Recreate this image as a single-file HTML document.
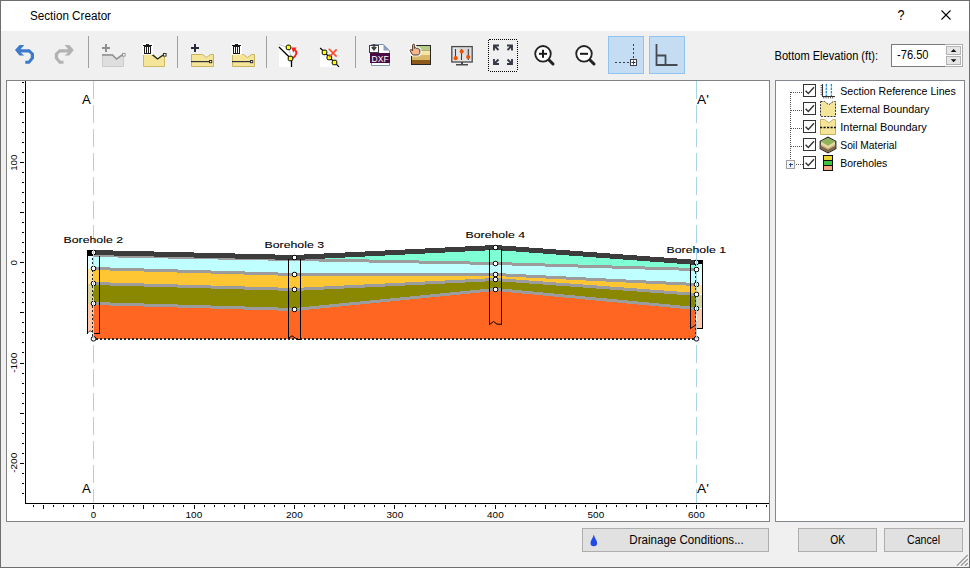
<!DOCTYPE html>
<html><head><meta charset="utf-8">
<style>
html,body{margin:0;padding:0;}
body{width:970px;height:568px;overflow:hidden;background:#f0f0f0;}
svg{display:block;font-family:"Liberation Sans", sans-serif;}
</style></head><body>
<svg width="970" height="568" viewBox="0 0 970 568">
<rect x="0" y="0" width="970" height="568" fill="#f0f0f0"/>
<rect x="1" y="1" width="968" height="30" fill="#fff"/>
<rect x="0.5" y="0.5" width="969" height="567" fill="none" stroke="#6e6e6e" shape-rendering="crispEdges"/>
<text x="30" y="20" font-size="12" text-anchor="start" fill="#000" textLength="81" lengthAdjust="spacingAndGlyphs" >Section Creator</text>
<text x="897.6" y="20" font-size="14.5" text-anchor="start" fill="#000" textLength="7" lengthAdjust="spacingAndGlyphs" >?</text>
<path d="M941.5 10.5 L950.5 19.5 M950.5 10.5 L941.5 19.5" stroke="#000" stroke-width="1.1" fill="none"/>
<g fill="#a0a0a0" shape-rendering="crispEdges">
<rect x="88" y="36" width="1" height="32"/>
<rect x="177" y="36" width="1" height="32"/>
<rect x="266" y="36" width="1" height="32"/>
<rect x="355" y="36" width="1" height="32"/>
</g>
<path d="M15 50 L19.5 45 H24.3 L20.6 49.2 H29.6 L34 53.4 V58.6 L29.6 63.8 H25.3 V60.8 H28.3 L30.8 57.6 V54.4 L28.6 52.4 H20.6 L24.3 55.6 H19.5 Z" fill="#3c7bcb"/>
<path d="M15 50 L19.5 45 H24.3 L20.6 49.2 H29.6 L34 53.4 V58.6 L29.6 63.8 H25.3 V60.8 H28.3 L30.8 57.6 V54.4 L28.6 52.4 H20.6 L24.3 55.6 H19.5 Z" transform="translate(88.8 0) scale(-1 1)" fill="#b2b2b2"/>
<path d="M102.5 54.5 H112.5 L116.5 58.5 L121.5 55 V54.5 H123.5 V66.5 H102.5 Z" fill="#dedede" stroke="#cacaca" stroke-width="1"/>
<path d="M102 55 H112.5 L116.5 59 L122 55.2" fill="none" stroke="#8e8e8e" stroke-width="1.4"/>
<rect x="122.5" y="53.5" width="2.6" height="2.6" fill="#fff" stroke="#8e8e8e" stroke-width="0.9"/>
<g fill="#8e8e8e" shape-rendering="crispEdges"><rect x="105" y="44" width="2" height="8"/><rect x="102" y="47" width="8" height="2"/></g>
<path d="M143.5 54.5 H153.5 L157.5 58.5 L162.5 55 V54.5 H164.5 V66.5 H143.5 Z" fill="#f5e598" stroke="#cdb962" stroke-width="1"/>
<path d="M152 54.6 L157.5 59 L163 55.2" fill="none" stroke="#222" stroke-width="1.3"/>
<rect x="163.5" y="53.5" width="2.6" height="2.6" fill="#fff" stroke="#222" stroke-width="0.9"/>
<rect x="142.5" y="43" width="10.5" height="12" fill="#fff" opacity="0.85"/>
<g fill="#1a1a1a" shape-rendering="crispEdges">
<rect x="143" y="45" width="9" height="1"/>
<rect x="146" y="44" width="3" height="1"/>
<rect x="144" y="46" width="7" height="8"/>
</g>
<g fill="#fff" shape-rendering="crispEdges"><rect x="145" y="47" width="1" height="6"/><rect x="147" y="47" width="1" height="6"/><rect x="149" y="47" width="1" height="6"/></g>
<path d="M191.5 54.5 H202.5 L206.5 57.5 L210.5 54.5 H213.5 V66.5 H191.5 Z" fill="#f5e598" stroke="#c7b35c" stroke-width="1"/>
<rect x="191" y="61" width="18" height="1.2" fill="#2d2f3a"/>
<rect x="209.5" y="60.5" width="2.2" height="2.2" fill="#fff" stroke="#2d2f3a" stroke-width="1"/>
<g fill="#2a2c38" shape-rendering="crispEdges"><rect x="194" y="44" width="2" height="8"/><rect x="191" y="47" width="8" height="2"/></g>
<path d="M232.5 54.5 H243.5 L247.5 57.5 L251.5 54.5 H254.5 V66.5 H232.5 Z" fill="#f5e598" stroke="#c7b35c" stroke-width="1"/>
<rect x="232" y="61" width="18" height="1.2" fill="#2d2f3a"/>
<rect x="250.5" y="60.5" width="2.2" height="2.2" fill="#fff" stroke="#2d2f3a" stroke-width="1"/>
<rect x="231.5" y="43" width="10.5" height="12" fill="#fff" opacity="0.85"/>
<g fill="#1a1a1a" shape-rendering="crispEdges">
<rect x="232" y="45" width="9" height="1"/>
<rect x="235" y="44" width="3" height="1"/>
<rect x="233" y="46" width="7" height="8"/>
</g>
<g fill="#fff" shape-rendering="crispEdges"><rect x="234" y="47" width="1" height="6"/><rect x="236" y="47" width="1" height="6"/><rect x="238" y="47" width="1" height="6"/></g>
<rect x="279" y="44" width="13" height="23" fill="#fff"/>
<path d="M279 44.5 L288.5 47.5 L291.5 58" fill="none" stroke="#c8c8c8" stroke-width="1"/>
<path d="M279 47 L290.5 58.3 M291.5 58.5 V67" fill="none" stroke="#000" stroke-width="1.3"/>
<path d="M292.2 58.4 C296.8 56 297.6 51.6 294.4 49.6" fill="none" stroke="#ff1a1a" stroke-width="1.8"/>
<path d="M291.4 47.6 L296.6 47.4 L293.2 52.6 Z" fill="#ff1a1a"/>
<rect x="286.2" y="45.1" width="4.6" height="4.6" rx="1.6" fill="#ffff00" stroke="#000" stroke-width="1"/>
<rect x="288.2" y="56.2" width="4.6" height="4.6" rx="1.6" fill="#ffff00" stroke="#000" stroke-width="1"/>
<path d="M320 48 L339 67 H320 Z" fill="#fff"/>
<path d="M320.2 48 L339 66.8" stroke="#000" stroke-width="1.2"/>
<rect x="322.2" y="50.1" width="4.6" height="4.6" rx="1.6" fill="#ffff00" stroke="#000" stroke-width="1"/>
<rect x="327.0" y="55.2" width="4.6" height="4.6" rx="1.6" fill="#ffff00" stroke="#000" stroke-width="1"/>
<rect x="332.2" y="60.2" width="4.6" height="4.6" rx="1.6" fill="#ffff00" stroke="#000" stroke-width="1"/>
<path d="M328.8 48.8 L336.6 56.6 M336.6 49.4 L329.4 57" stroke="#ff4a2a" stroke-width="1.6"/>
<path d="M371.5 44.5 H383.5 L389.5 50.5 V65.5 H371.5 Z" fill="#fff" stroke="#7f93b2" stroke-width="1"/>
<path d="M383.5 44.5 V50.5 H389.5 Z" fill="#8c9fbf"/>
<rect x="370" y="53" width="20" height="10" fill="#4a0a48"/>
<text x="371.6" y="61.8" font-size="9.6" fill="#fff" textLength="17" lengthAdjust="spacingAndGlyphs">DXF</text>
<rect x="369.5" y="45.5" width="9" height="7" fill="#fff" stroke="#3e3e3e" stroke-width="1"/>
<path d="M374 44 V49 M371.8 47 L374 49.7 L376.2 47" fill="none" stroke="#3e3e3e" stroke-width="1.6"/>
<rect x="411" y="45" width="20" height="20" fill="#262626" />
<rect x="412" y="46" width="18" height="4.5" fill="#b4cc88"/>
<rect x="412" y="50.5" width="18" height="4.5" fill="#f5e4a2"/>
<rect x="412" y="55" width="18" height="5" fill="#d8b868"/>
<rect x="412" y="60" width="18" height="4" fill="#8e5a1a"/>
<path d="M412.4 54.6 L410.3 51 C409.6 50 410.6 48.9 411.6 49.7 L412.6 50.8 V45.2 C412.6 43.7 414.6 43.7 414.6 45.2 V48.3 C415.2 47.5 416.4 47.6 416.6 48.5 C417.2 47.9 418.3 48.2 418.4 49 C419 48.6 419.8 49.1 419.8 49.9 V52.6 C419.8 54.1 418.8 55 417.2 55 H413.4 Z" fill="#fff" stroke="#fff" stroke-width="3.2" stroke-linejoin="round"/>
<path d="M412.4 54.6 L410.3 51 C409.6 50 410.6 48.9 411.6 49.7 L412.6 50.8 V45.2 C412.6 43.7 414.6 43.7 414.6 45.2 V48.3 C415.2 47.5 416.4 47.6 416.6 48.5 C417.2 47.9 418.3 48.2 418.4 49 C419 48.6 419.8 49.1 419.8 49.9 V52.6 C419.8 54.1 418.8 55 417.2 55 H413.4 Z" fill="#f5b78b" stroke="#3a2418" stroke-width="0.9"/>
<rect x="451.8" y="46.6" width="20.4" height="15.4" fill="#e4e4e4" stroke="#4a4a4a" stroke-width="1.3"/>
<path d="M458 48 L470.5 60 V48 Z" fill="#d6d6d6"/>
<rect x="461" y="62" width="2" height="2" fill="#4a4a4a"/><rect x="456" y="64" width="12" height="1.5" fill="#4a4a4a"/>
<path d="M455.5 49 V60 M461.5 49 V60 M468.3 49 V60" stroke="#3e3e3e" stroke-width="1.1"/>
<circle cx="455.7" cy="58.2" r="2.1" fill="#ee5500"/>
<circle cx="461.7" cy="51.6" r="2.1" fill="#ee5500"/>
<circle cx="468.2" cy="57" r="2.1" fill="#ee5500"/>
<rect x="488.5" y="39.5" width="29" height="32" rx="1.5" fill="none" stroke="#000" stroke-width="1" stroke-dasharray="1 1" shape-rendering="crispEdges"/>
<g fill="none" stroke="#353946" stroke-width="1.9">
<path d="M494 50.5 V45.5 H499 M494.5 46 L498.5 50"/>
<path d="M507 45.5 H512 V50.5 M511.5 46 L507.5 50"/>
<path d="M494 59 V64 H499 M494.5 63.5 L498.5 59.5"/>
<path d="M507 64 H512 V59 M511.5 63.5 L507.5 59.5"/>
</g>
<path d="M548.5 59.5 L553 64.0" stroke="#222" stroke-width="3" stroke-linecap="round"/>
<circle cx="543" cy="53.8" r="7.8" fill="#fff" stroke="#222" stroke-width="1.8"/>
<rect x="539" y="52.8" width="8" height="2" fill="#1a1a1a"/>
<rect x="542" y="49.8" width="2" height="8" fill="#1a1a1a"/>
<path d="M589.5 59.5 L594 64.0" stroke="#222" stroke-width="3" stroke-linecap="round"/>
<circle cx="584" cy="53.8" r="7.8" fill="#fff" stroke="#222" stroke-width="1.8"/>
<rect x="580" y="52.8" width="8" height="2" fill="#1a1a1a"/>
<rect x="608.5" y="36.5" width="35" height="37" fill="#c4ddf2" stroke="#8fc4f2" shape-rendering="crispEdges"/>
<rect x="649.5" y="36.5" width="35" height="37" fill="#c4ddf2" stroke="#8fc4f2" shape-rendering="crispEdges"/>
<path d="M633.5 44 V58" stroke="#3a3f48" stroke-width="1.1" stroke-dasharray="2 2" shape-rendering="crispEdges"/>
<path d="M615 62.5 H629" stroke="#3a3f48" stroke-width="1.1" stroke-dasharray="2 2" shape-rendering="crispEdges"/>
<rect x="630.5" y="59.5" width="6" height="6" fill="#fff" stroke="#3a3f48" stroke-width="1"/>
<path d="M631.5 62.5 H635.5 M633.5 60.5 V64.5" stroke="#3a3f48" stroke-width="1"/>
<path d="M656.5 44 V65 H677.5 M656.5 55.5 H665.5 V65" fill="none" stroke="#454a52" stroke-width="1.8"/>
<text x="774.5" y="60" font-size="12" text-anchor="start" fill="#000" textLength="103.5" lengthAdjust="spacingAndGlyphs" >Bottom Elevation (ft):</text>
<rect x="891.5" y="44.5" width="71" height="22" fill="#fff" stroke="#adadad" shape-rendering="crispEdges"/>
<path d="M945 44.5 H891.5 V66.5 H945" fill="none" stroke="#7a7a7a" shape-rendering="crispEdges"/>
<rect x="946.5" y="46.5" width="14" height="8" fill="#e6e6e6" stroke="#b4b4b4" shape-rendering="crispEdges"/>
<rect x="946.5" y="56.5" width="14" height="8" fill="#e6e6e6" stroke="#b4b4b4" shape-rendering="crispEdges"/>
<path d="M950.8 52 L953.6 49 L956.4 52 Z" fill="#111"/>
<path d="M950.8 59.2 L953.6 62.2 L956.4 59.2 Z" fill="#111"/>
<text x="897" y="58.5" font-size="12" text-anchor="start" fill="#000" textLength="31.5" lengthAdjust="spacingAndGlyphs" >-76.50</text>
<rect x="6.5" y="80.5" width="763" height="441" fill="#fff" stroke="#828282" shape-rendering="crispEdges"/>
<rect x="775.5" y="80.5" width="189" height="441" fill="#fff" stroke="#828790" shape-rendering="crispEdges"/>
<g stroke="#555" stroke-width="1" stroke-dasharray="1 1" shape-rendering="crispEdges" fill="none">
<path d="M790.5 92 V160"/>
<path d="M791 92.5 H803"/>
<path d="M791 110.5 H803"/>
<path d="M791 128.5 H803"/>
<path d="M791 146.5 H803"/>
<path d="M796 164.5 H803"/>
</g>
<rect x="786.5" y="160.5" width="8" height="8" fill="#f4f4f4" stroke="#a0a0a0" shape-rendering="crispEdges"/>
<path d="M788.5 164.5 H792.5 M790.5 162.5 V166.5" stroke="#2c4a9a" stroke-width="1" shape-rendering="crispEdges"/>
<rect x="803.5" y="84.5" width="12" height="12" fill="#fff" stroke="#333" shape-rendering="crispEdges"/>
<path d="M805.6 90.8 L808.3 93.5 L814 87.3" fill="none" stroke="#333" stroke-width="1.4"/>
<rect x="803.5" y="102.5" width="12" height="12" fill="#fff" stroke="#333" shape-rendering="crispEdges"/>
<path d="M805.6 108.8 L808.3 111.5 L814 105.3" fill="none" stroke="#333" stroke-width="1.4"/>
<rect x="803.5" y="120.5" width="12" height="12" fill="#fff" stroke="#333" shape-rendering="crispEdges"/>
<path d="M805.6 126.8 L808.3 129.5 L814 123.3" fill="none" stroke="#333" stroke-width="1.4"/>
<rect x="803.5" y="138.5" width="12" height="12" fill="#fff" stroke="#333" shape-rendering="crispEdges"/>
<path d="M805.6 144.8 L808.3 147.5 L814 141.3" fill="none" stroke="#333" stroke-width="1.4"/>
<rect x="803.5" y="156.5" width="12" height="12" fill="#fff" stroke="#333" shape-rendering="crispEdges"/>
<path d="M805.6 162.8 L808.3 165.5 L814 159.3" fill="none" stroke="#333" stroke-width="1.4"/>
<path d="M822.5 84 V96.5 H835" fill="none" stroke="#333" stroke-width="1.1"/>
<path d="M820.6 85.5 H822 M820.6 87.7 H822 M820.6 90 H822 M820.6 92.2 H822 M820.6 94.4 H822 M823.8 97 V98.4 M826 97 V98.4 M828.3 97 V98.4 M830.5 97 V98.4 M832.7 97 V98.4" stroke="#444" stroke-width="0.9"/>
<path d="M826.3 84 V96 M831.4 84 V96" stroke="#1a8ce0" stroke-width="1.3" stroke-dasharray="2.5 1"/>
<path d="M820.5 101.5 H824.5 L828.8 104.8 L833.2 101.5 H835.5 V116.5 H820.5 Z" fill="#f5e598" stroke="#333" stroke-width="1" stroke-dasharray="2 1.2"/>
<path d="M820.5 119.5 H824.5 L828.8 122.8 L833.2 119.5 H835.5 V134.5 H820.5 Z" fill="#f5e598" stroke="#c8b064" stroke-width="1"/>
<path d="M820 127.5 H836" stroke="#111" stroke-width="1.3" stroke-dasharray="2.2 1.3"/>
<path d="M828 136.6 L836.4 141 V149 L828 153.4 L819.6 149 V141 Z" fill="#262626"/>
<path d="M828 138 L835.2 141.6 V148.4 L828 152.2 L820.8 148.4 V141.6 Z" fill="#e6d9a2"/>
<path d="M820.8 145.8 L828 149.6 L835.2 145.8 V148.4 L828 152.2 L820.8 148.4 Z" fill="#7b6243"/>
<path d="M820.8 144.6 L828 148.4 L835.2 144.6 V145.9 L828 149.7 L820.8 145.9 Z" fill="#b9a273"/>
<path d="M828 138 L835.2 141.6 L828 145.8 L820.8 141.6 Z" fill="#8db45a"/>
<rect x="823" y="155" width="10" height="16" fill="#111"/>
<rect x="824" y="156" width="8" height="4" fill="#e8d630"/>
<rect x="824" y="161" width="8" height="4" fill="#3ec43e"/>
<rect x="824" y="166" width="8" height="4" fill="#f2a983"/>
<text x="840.3" y="94.6" font-size="11.5" text-anchor="start" fill="#000" textLength="115.5" lengthAdjust="spacingAndGlyphs" >Section Reference Lines</text>
<text x="840.3" y="112.6" font-size="11.5" text-anchor="start" fill="#000" textLength="89" lengthAdjust="spacingAndGlyphs" >External Boundary</text>
<text x="840.3" y="130.6" font-size="11.5" text-anchor="start" fill="#000" textLength="86.5" lengthAdjust="spacingAndGlyphs" >Internal Boundary</text>
<text x="840.3" y="148.6" font-size="11.5" text-anchor="start" fill="#000" textLength="56.5" lengthAdjust="spacingAndGlyphs" >Soil Material</text>
<text x="840.3" y="166.6" font-size="11.5" text-anchor="start" fill="#000" textLength="47" lengthAdjust="spacingAndGlyphs" >Boreholes</text>
<rect x="582.5" y="528.5" width="186" height="23" fill="#e1e1e1" stroke="#adadad" shape-rendering="crispEdges"/>
<rect x="798.5" y="528.5" width="78" height="23" fill="#e1e1e1" stroke="#adadad" shape-rendering="crispEdges"/>
<rect x="884.5" y="528.5" width="78" height="23" fill="#e1e1e1" stroke="#adadad" shape-rendering="crispEdges"/>
<text x="629.3" y="544" font-size="12" text-anchor="start" fill="#000" textLength="114.5" lengthAdjust="spacingAndGlyphs" >Drainage Conditions...</text>
<text x="830.3" y="544" font-size="12" text-anchor="start" fill="#000" textLength="14.8" lengthAdjust="spacingAndGlyphs" >OK</text>
<text x="907" y="544" font-size="12" text-anchor="start" fill="#000" textLength="33" lengthAdjust="spacingAndGlyphs" >Cancel</text>
<path d="M593.8 534.5 C593 538 590.5 540.5 590.5 543 A3.3 3.3 0 0 0 597.1 543 C597.1 540.5 594.6 538 593.8 534.5 Z" fill="#2149e8"/>
<path d="M957.5 566.5 L968.5 555.5 M961.5 566.5 L968.5 559.5 M965.5 566.5 L968.5 563.5" stroke="#fff" stroke-width="1.6"/>
<path d="M957 565.8 L967.8 555 M961 565.8 L967.8 559 M965 565.8 L967.8 563" stroke="#9a9a9a" stroke-width="1.4"/>
<g shape-rendering="crispEdges" fill="#000">
<rect x="25" y="81" width="1" height="423"/>
<rect x="25" y="503" width="744" height="1"/>
<rect x="22" y="493" width="2" height="1"/>
<rect x="22" y="483" width="2" height="1"/>
<rect x="22" y="473" width="2" height="1"/>
<rect x="20" y="463" width="4" height="1"/>
<rect x="22" y="453" width="2" height="1"/>
<rect x="22" y="443" width="2" height="1"/>
<rect x="22" y="433" width="2" height="1"/>
<rect x="22" y="423" width="2" height="1"/>
<rect x="20" y="413" width="4" height="1"/>
<rect x="22" y="403" width="2" height="1"/>
<rect x="22" y="393" width="2" height="1"/>
<rect x="22" y="383" width="2" height="1"/>
<rect x="22" y="373" width="2" height="1"/>
<rect x="20" y="363" width="4" height="1"/>
<rect x="22" y="352" width="2" height="1"/>
<rect x="22" y="342" width="2" height="1"/>
<rect x="22" y="332" width="2" height="1"/>
<rect x="22" y="322" width="2" height="1"/>
<rect x="20" y="312" width="4" height="1"/>
<rect x="22" y="302" width="2" height="1"/>
<rect x="22" y="292" width="2" height="1"/>
<rect x="22" y="282" width="2" height="1"/>
<rect x="22" y="272" width="2" height="1"/>
<rect x="20" y="262" width="4" height="1"/>
<rect x="22" y="252" width="2" height="1"/>
<rect x="22" y="242" width="2" height="1"/>
<rect x="22" y="232" width="2" height="1"/>
<rect x="22" y="222" width="2" height="1"/>
<rect x="20" y="212" width="4" height="1"/>
<rect x="22" y="202" width="2" height="1"/>
<rect x="22" y="192" width="2" height="1"/>
<rect x="22" y="182" width="2" height="1"/>
<rect x="22" y="172" width="2" height="1"/>
<rect x="20" y="162" width="4" height="1"/>
<rect x="22" y="152" width="2" height="1"/>
<rect x="22" y="142" width="2" height="1"/>
<rect x="22" y="132" width="2" height="1"/>
<rect x="22" y="122" width="2" height="1"/>
<rect x="20" y="112" width="4" height="1"/>
<rect x="22" y="102" width="2" height="1"/>
<rect x="22" y="92" width="2" height="1"/>
<rect x="22" y="82" width="2" height="1"/>
<rect x="33" y="505" width="1" height="2"/>
<rect x="43" y="505" width="1" height="4"/>
<rect x="53" y="505" width="1" height="2"/>
<rect x="63" y="505" width="1" height="2"/>
<rect x="73" y="505" width="1" height="2"/>
<rect x="83" y="505" width="1" height="2"/>
<rect x="93" y="505" width="1" height="4"/>
<rect x="103" y="505" width="1" height="2"/>
<rect x="113" y="505" width="1" height="2"/>
<rect x="123" y="505" width="1" height="2"/>
<rect x="133" y="505" width="1" height="2"/>
<rect x="143" y="505" width="1" height="4"/>
<rect x="153" y="505" width="1" height="2"/>
<rect x="163" y="505" width="1" height="2"/>
<rect x="173" y="505" width="1" height="2"/>
<rect x="183" y="505" width="1" height="2"/>
<rect x="194" y="505" width="1" height="4"/>
<rect x="204" y="505" width="1" height="2"/>
<rect x="214" y="505" width="1" height="2"/>
<rect x="224" y="505" width="1" height="2"/>
<rect x="234" y="505" width="1" height="2"/>
<rect x="244" y="505" width="1" height="4"/>
<rect x="254" y="505" width="1" height="2"/>
<rect x="264" y="505" width="1" height="2"/>
<rect x="274" y="505" width="1" height="2"/>
<rect x="284" y="505" width="1" height="2"/>
<rect x="294" y="505" width="1" height="4"/>
<rect x="304" y="505" width="1" height="2"/>
<rect x="314" y="505" width="1" height="2"/>
<rect x="324" y="505" width="1" height="2"/>
<rect x="334" y="505" width="1" height="2"/>
<rect x="344" y="505" width="1" height="4"/>
<rect x="354" y="505" width="1" height="2"/>
<rect x="364" y="505" width="1" height="2"/>
<rect x="374" y="505" width="1" height="2"/>
<rect x="384" y="505" width="1" height="2"/>
<rect x="394" y="505" width="1" height="4"/>
<rect x="405" y="505" width="1" height="2"/>
<rect x="415" y="505" width="1" height="2"/>
<rect x="425" y="505" width="1" height="2"/>
<rect x="435" y="505" width="1" height="2"/>
<rect x="445" y="505" width="1" height="4"/>
<rect x="455" y="505" width="1" height="2"/>
<rect x="465" y="505" width="1" height="2"/>
<rect x="475" y="505" width="1" height="2"/>
<rect x="485" y="505" width="1" height="2"/>
<rect x="495" y="505" width="1" height="4"/>
<rect x="505" y="505" width="1" height="2"/>
<rect x="515" y="505" width="1" height="2"/>
<rect x="525" y="505" width="1" height="2"/>
<rect x="535" y="505" width="1" height="2"/>
<rect x="545" y="505" width="1" height="4"/>
<rect x="555" y="505" width="1" height="2"/>
<rect x="565" y="505" width="1" height="2"/>
<rect x="575" y="505" width="1" height="2"/>
<rect x="585" y="505" width="1" height="2"/>
<rect x="596" y="505" width="1" height="4"/>
<rect x="606" y="505" width="1" height="2"/>
<rect x="616" y="505" width="1" height="2"/>
<rect x="626" y="505" width="1" height="2"/>
<rect x="636" y="505" width="1" height="2"/>
<rect x="646" y="505" width="1" height="4"/>
<rect x="656" y="505" width="1" height="2"/>
<rect x="666" y="505" width="1" height="2"/>
<rect x="676" y="505" width="1" height="2"/>
<rect x="686" y="505" width="1" height="2"/>
<rect x="696" y="505" width="1" height="4"/>
<rect x="706" y="505" width="1" height="2"/>
<rect x="716" y="505" width="1" height="2"/>
<rect x="726" y="505" width="1" height="2"/>
<rect x="736" y="505" width="1" height="2"/>
<rect x="746" y="505" width="1" height="4"/>
<rect x="756" y="505" width="1" height="2"/>
<rect x="766" y="505" width="1" height="2"/>
</g>
<text transform="translate(17.3 162.7) rotate(-90)" text-anchor="middle" font-size="9.2" fill="#000" textLength="16.3" lengthAdjust="spacingAndGlyphs">100</text>
<text transform="translate(17.3 262.8) rotate(-90)" text-anchor="middle" font-size="9.2" fill="#000" textLength="5.4" lengthAdjust="spacingAndGlyphs">0</text>
<text transform="translate(17.3 362.8) rotate(-90)" text-anchor="middle" font-size="9.2" fill="#000" textLength="20" lengthAdjust="spacingAndGlyphs">-100</text>
<text transform="translate(17.3 462.8) rotate(-90)" text-anchor="middle" font-size="9.2" fill="#000" textLength="20" lengthAdjust="spacingAndGlyphs">-200</text>
<text x="93.4" y="517.6" text-anchor="middle" font-size="9.2" fill="#000" textLength="5.4" lengthAdjust="spacingAndGlyphs">0</text>
<text x="193.9" y="517.6" text-anchor="middle" font-size="9.2" fill="#000" textLength="16.6" lengthAdjust="spacingAndGlyphs">100</text>
<text x="294.4" y="517.6" text-anchor="middle" font-size="9.2" fill="#000" textLength="16.6" lengthAdjust="spacingAndGlyphs">200</text>
<text x="394.9" y="517.6" text-anchor="middle" font-size="9.2" fill="#000" textLength="16.6" lengthAdjust="spacingAndGlyphs">300</text>
<text x="495.4" y="517.6" text-anchor="middle" font-size="9.2" fill="#000" textLength="16.6" lengthAdjust="spacingAndGlyphs">400</text>
<text x="595.9" y="517.6" text-anchor="middle" font-size="9.2" fill="#000" textLength="16.6" lengthAdjust="spacingAndGlyphs">500</text>
<text x="696.4" y="517.6" text-anchor="middle" font-size="9.2" fill="#000" textLength="16.6" lengthAdjust="spacingAndGlyphs">600</text>
<g shape-rendering="crispEdges">
<rect x="87" y="250" width="6" height="6" fill="#000"/>
<rect x="87" y="250" width="1" height="84" fill="#000"/>
<rect x="88" y="256" width="5" height="13" fill="#e0ffff"/>
<rect x="88" y="269" width="5" height="15" fill="#ffe6a8"/>
<rect x="88" y="284" width="5" height="20" fill="#d8d49c"/>
<rect x="88" y="304" width="5" height="29" fill="#ffc8a8"/>
<rect x="697" y="260" width="6" height="4" fill="#000"/>
<rect x="702" y="260" width="1" height="69" fill="#000"/>
<rect x="697" y="264" width="5" height="5" fill="#c8fff0"/>
<rect x="697" y="269" width="5" height="15" fill="#e0ffff"/>
<rect x="697" y="285" width="5" height="9" fill="#ffe6a8"/>
<rect x="697" y="295" width="5" height="13" fill="#d8d49c"/>
<rect x="697" y="309" width="5" height="19" fill="#ffc8a8"/>
<rect x="697" y="328" width="6" height="1" fill="#000"/>
</g>
<path d="M87.5 333.5 L89.5 331.2 L91 331.2 L93 332.5" fill="none" stroke="#000" stroke-width="1"/>
<path d="M88 333 L89.5 331.6 L91 331.6 L93 333 Z" fill="#fff"/>
<g shape-rendering="crispEdges">
<polygon points="93,252.5 294.5,257.5 495.5,247.5 696,262.4 696,269.53 495.5,263.53 294.5,259.53 93,255.51" fill="#7fffd4"/>
<polygon points="93,255.51 294.5,259.53 495.5,263.53 696,269.53 696,284.49 495.5,274.49 294.5,274.49 93,268.49" fill="#bfffff"/>
<polygon points="93,268.49 294.5,274.49 495.5,274.49 696,284.49 696,294.4 495.5,279.49 294.5,289.49 93,283.49" fill="#ffc633"/>
<polygon points="93,283.49 294.5,289.49 495.5,279.49 696,294.4 696,308.5 495.5,289.49 294.5,309.49 93,303.49" fill="#8a8800"/>
<polygon points="93,303.49 294.5,309.49 495.5,289.49 696,308.5 696,339 93,339" fill="#ff6622"/>
<polyline points="93,255.51 294.5,259.53 495.5,263.53 696,269.53" fill="none" stroke="#9c9c9c" stroke-width="3"/>
<polyline points="93,268.49 294.5,274.49 495.5,274.49 696,284.49" fill="none" stroke="#9c9c9c" stroke-width="3"/>
<polyline points="93,283.49 294.5,289.49 495.5,279.49 696,294.4" fill="none" stroke="#9c9c9c" stroke-width="3"/>
<polyline points="93,303.49 294.5,309.49 495.5,289.49 696,308.5" fill="none" stroke="#9c9c9c" stroke-width="3"/>
<polyline points="93,252.5 294.5,257.5 495.5,247.5 696,262.4" fill="none" stroke="#3c3c3c" stroke-width="5"/>
</g>
<g fill="#1a2836" shape-rendering="crispEdges">
<rect x="92" y="338" width="2" height="2"/>
<rect x="96" y="338" width="2" height="2"/>
<rect x="100" y="338" width="2" height="2"/>
<rect x="104" y="338" width="2" height="2"/>
<rect x="108" y="338" width="2" height="2"/>
<rect x="112" y="338" width="2" height="2"/>
<rect x="116" y="338" width="2" height="2"/>
<rect x="120" y="338" width="2" height="2"/>
<rect x="124" y="338" width="2" height="2"/>
<rect x="128" y="338" width="2" height="2"/>
<rect x="132" y="338" width="2" height="2"/>
<rect x="136" y="338" width="2" height="2"/>
<rect x="140" y="338" width="2" height="2"/>
<rect x="144" y="338" width="2" height="2"/>
<rect x="148" y="338" width="2" height="2"/>
<rect x="152" y="338" width="2" height="2"/>
<rect x="156" y="338" width="2" height="2"/>
<rect x="160" y="338" width="2" height="2"/>
<rect x="164" y="338" width="2" height="2"/>
<rect x="168" y="338" width="2" height="2"/>
<rect x="172" y="338" width="2" height="2"/>
<rect x="176" y="338" width="2" height="2"/>
<rect x="180" y="338" width="2" height="2"/>
<rect x="184" y="338" width="2" height="2"/>
<rect x="188" y="338" width="2" height="2"/>
<rect x="192" y="338" width="2" height="2"/>
<rect x="196" y="338" width="2" height="2"/>
<rect x="200" y="338" width="2" height="2"/>
<rect x="204" y="338" width="2" height="2"/>
<rect x="208" y="338" width="2" height="2"/>
<rect x="212" y="338" width="2" height="2"/>
<rect x="216" y="338" width="2" height="2"/>
<rect x="220" y="338" width="2" height="2"/>
<rect x="224" y="338" width="2" height="2"/>
<rect x="228" y="338" width="2" height="2"/>
<rect x="232" y="338" width="2" height="2"/>
<rect x="236" y="338" width="2" height="2"/>
<rect x="240" y="338" width="2" height="2"/>
<rect x="244" y="338" width="2" height="2"/>
<rect x="248" y="338" width="2" height="2"/>
<rect x="252" y="338" width="2" height="2"/>
<rect x="256" y="338" width="2" height="2"/>
<rect x="260" y="338" width="2" height="2"/>
<rect x="264" y="338" width="2" height="2"/>
<rect x="268" y="338" width="2" height="2"/>
<rect x="272" y="338" width="2" height="2"/>
<rect x="276" y="338" width="2" height="2"/>
<rect x="280" y="338" width="2" height="2"/>
<rect x="284" y="338" width="2" height="2"/>
<rect x="288" y="338" width="2" height="2"/>
<rect x="292" y="338" width="2" height="2"/>
<rect x="296" y="338" width="2" height="2"/>
<rect x="300" y="338" width="2" height="2"/>
<rect x="304" y="338" width="2" height="2"/>
<rect x="308" y="338" width="2" height="2"/>
<rect x="312" y="338" width="2" height="2"/>
<rect x="316" y="338" width="2" height="2"/>
<rect x="320" y="338" width="2" height="2"/>
<rect x="324" y="338" width="2" height="2"/>
<rect x="328" y="338" width="2" height="2"/>
<rect x="332" y="338" width="2" height="2"/>
<rect x="336" y="338" width="2" height="2"/>
<rect x="340" y="338" width="2" height="2"/>
<rect x="344" y="338" width="2" height="2"/>
<rect x="348" y="338" width="2" height="2"/>
<rect x="352" y="338" width="2" height="2"/>
<rect x="356" y="338" width="2" height="2"/>
<rect x="360" y="338" width="2" height="2"/>
<rect x="364" y="338" width="2" height="2"/>
<rect x="368" y="338" width="2" height="2"/>
<rect x="372" y="338" width="2" height="2"/>
<rect x="376" y="338" width="2" height="2"/>
<rect x="380" y="338" width="2" height="2"/>
<rect x="384" y="338" width="2" height="2"/>
<rect x="388" y="338" width="2" height="2"/>
<rect x="392" y="338" width="2" height="2"/>
<rect x="396" y="338" width="2" height="2"/>
<rect x="400" y="338" width="2" height="2"/>
<rect x="404" y="338" width="2" height="2"/>
<rect x="408" y="338" width="2" height="2"/>
<rect x="412" y="338" width="2" height="2"/>
<rect x="416" y="338" width="2" height="2"/>
<rect x="420" y="338" width="2" height="2"/>
<rect x="424" y="338" width="2" height="2"/>
<rect x="428" y="338" width="2" height="2"/>
<rect x="432" y="338" width="2" height="2"/>
<rect x="436" y="338" width="2" height="2"/>
<rect x="440" y="338" width="2" height="2"/>
<rect x="444" y="338" width="2" height="2"/>
<rect x="448" y="338" width="2" height="2"/>
<rect x="452" y="338" width="2" height="2"/>
<rect x="456" y="338" width="2" height="2"/>
<rect x="460" y="338" width="2" height="2"/>
<rect x="464" y="338" width="2" height="2"/>
<rect x="468" y="338" width="2" height="2"/>
<rect x="472" y="338" width="2" height="2"/>
<rect x="476" y="338" width="2" height="2"/>
<rect x="480" y="338" width="2" height="2"/>
<rect x="484" y="338" width="2" height="2"/>
<rect x="488" y="338" width="2" height="2"/>
<rect x="492" y="338" width="2" height="2"/>
<rect x="496" y="338" width="2" height="2"/>
<rect x="500" y="338" width="2" height="2"/>
<rect x="504" y="338" width="2" height="2"/>
<rect x="508" y="338" width="2" height="2"/>
<rect x="512" y="338" width="2" height="2"/>
<rect x="516" y="338" width="2" height="2"/>
<rect x="520" y="338" width="2" height="2"/>
<rect x="524" y="338" width="2" height="2"/>
<rect x="528" y="338" width="2" height="2"/>
<rect x="532" y="338" width="2" height="2"/>
<rect x="536" y="338" width="2" height="2"/>
<rect x="540" y="338" width="2" height="2"/>
<rect x="544" y="338" width="2" height="2"/>
<rect x="548" y="338" width="2" height="2"/>
<rect x="552" y="338" width="2" height="2"/>
<rect x="556" y="338" width="2" height="2"/>
<rect x="560" y="338" width="2" height="2"/>
<rect x="564" y="338" width="2" height="2"/>
<rect x="568" y="338" width="2" height="2"/>
<rect x="572" y="338" width="2" height="2"/>
<rect x="576" y="338" width="2" height="2"/>
<rect x="580" y="338" width="2" height="2"/>
<rect x="584" y="338" width="2" height="2"/>
<rect x="588" y="338" width="2" height="2"/>
<rect x="592" y="338" width="2" height="2"/>
<rect x="596" y="338" width="2" height="2"/>
<rect x="600" y="338" width="2" height="2"/>
<rect x="604" y="338" width="2" height="2"/>
<rect x="608" y="338" width="2" height="2"/>
<rect x="612" y="338" width="2" height="2"/>
<rect x="616" y="338" width="2" height="2"/>
<rect x="620" y="338" width="2" height="2"/>
<rect x="624" y="338" width="2" height="2"/>
<rect x="628" y="338" width="2" height="2"/>
<rect x="632" y="338" width="2" height="2"/>
<rect x="636" y="338" width="2" height="2"/>
<rect x="640" y="338" width="2" height="2"/>
<rect x="644" y="338" width="2" height="2"/>
<rect x="648" y="338" width="2" height="2"/>
<rect x="652" y="338" width="2" height="2"/>
<rect x="656" y="338" width="2" height="2"/>
<rect x="660" y="338" width="2" height="2"/>
<rect x="664" y="338" width="2" height="2"/>
<rect x="668" y="338" width="2" height="2"/>
<rect x="672" y="338" width="2" height="2"/>
<rect x="676" y="338" width="2" height="2"/>
<rect x="680" y="338" width="2" height="2"/>
<rect x="684" y="338" width="2" height="2"/>
<rect x="688" y="338" width="2" height="2"/>
<rect x="692" y="338" width="2" height="2"/>
<rect x="696" y="338" width="2" height="2"/>
<rect x="92" y="258" width="1" height="2"/>
<rect x="695" y="260" width="1" height="2"/>
<rect x="92" y="262" width="1" height="2"/>
<rect x="695" y="264" width="1" height="2"/>
<rect x="92" y="266" width="1" height="2"/>
<rect x="695" y="268" width="1" height="2"/>
<rect x="92" y="270" width="1" height="2"/>
<rect x="695" y="272" width="1" height="2"/>
<rect x="92" y="274" width="1" height="2"/>
<rect x="695" y="276" width="1" height="2"/>
<rect x="92" y="278" width="1" height="2"/>
<rect x="695" y="280" width="1" height="2"/>
<rect x="92" y="282" width="1" height="2"/>
<rect x="695" y="284" width="1" height="2"/>
<rect x="92" y="286" width="1" height="2"/>
<rect x="695" y="288" width="1" height="2"/>
<rect x="92" y="290" width="1" height="2"/>
<rect x="695" y="292" width="1" height="2"/>
<rect x="92" y="294" width="1" height="2"/>
<rect x="695" y="296" width="1" height="2"/>
<rect x="92" y="298" width="1" height="2"/>
<rect x="695" y="300" width="1" height="2"/>
<rect x="92" y="302" width="1" height="2"/>
<rect x="695" y="304" width="1" height="2"/>
<rect x="92" y="306" width="1" height="2"/>
<rect x="695" y="308" width="1" height="2"/>
<rect x="92" y="310" width="1" height="2"/>
<rect x="695" y="312" width="1" height="2"/>
<rect x="92" y="314" width="1" height="2"/>
<rect x="695" y="316" width="1" height="2"/>
<rect x="92" y="318" width="1" height="2"/>
<rect x="695" y="320" width="1" height="2"/>
<rect x="92" y="322" width="1" height="2"/>
<rect x="695" y="324" width="1" height="2"/>
<rect x="92" y="326" width="1" height="2"/>
<rect x="695" y="328" width="1" height="2"/>
<rect x="92" y="330" width="1" height="2"/>
<rect x="695" y="332" width="1" height="2"/>
<rect x="92" y="334" width="1" height="2"/>
<rect x="695" y="336" width="1" height="2"/>
</g>
<g fill="none" stroke="#000" stroke-width="1" shape-rendering="crispEdges">
<path d="M288.5 259 V338.5 M300.5 259 V339.5"/>
<path d="M489.5 249 V324.5 M501.5 249 V324.5"/>
<path d="M99.5 256 V333.5 H93"/>
<path d="M690.5 264 V328.5"/>
</g>
<g fill="none" stroke="#000" stroke-width="1">
<path d="M489.5 324.5 L493.5 321.5 L497 324.2 H501.5"/>
<path d="M288.5 338.5 L292 335.8 L295.5 338.2 L298 339.5 H300.5"/>
<path d="M690.5 328.5 L695 325.5"/>
</g>
<g fill="#fff" stroke="#000" stroke-width="1">
<rect x="91.3" y="250.3" width="4.4" height="4.4" rx="1.8"/>
<rect x="91.3" y="266.29" width="4.4" height="4.4" rx="1.8"/>
<rect x="91.3" y="281.29" width="4.4" height="4.4" rx="1.8"/>
<rect x="91.3" y="301.29" width="4.4" height="4.4" rx="1.8"/>
<rect x="292.3" y="255.3" width="4.4" height="4.4" rx="1.8"/>
<rect x="292.3" y="272.29" width="4.4" height="4.4" rx="1.8"/>
<rect x="292.3" y="287.29" width="4.4" height="4.4" rx="1.8"/>
<rect x="292.3" y="307.29" width="4.4" height="4.4" rx="1.8"/>
<rect x="493.3" y="245.3" width="4.4" height="4.4" rx="1.8"/>
<rect x="493.3" y="261.33" width="4.4" height="4.4" rx="1.8"/>
<rect x="493.3" y="272.29" width="4.4" height="4.4" rx="1.8"/>
<rect x="493.3" y="277.29" width="4.4" height="4.4" rx="1.8"/>
<rect x="493.3" y="287.29" width="4.4" height="4.4" rx="1.8"/>
<rect x="694.3" y="260.2" width="4.4" height="4.4" rx="1.8"/>
<rect x="694.3" y="267.33" width="4.4" height="4.4" rx="1.8"/>
<rect x="694.3" y="282.29" width="4.4" height="4.4" rx="1.8"/>
<rect x="694.3" y="292.2" width="4.4" height="4.4" rx="1.8"/>
<rect x="694.3" y="306.3" width="4.4" height="4.4" rx="1.8"/>
<rect x="91.3" y="336.6" width="4.4" height="4.4" rx="1.8"/>
<rect x="694.3" y="336.6" width="4.4" height="4.4" rx="1.8"/>
</g>
<g shape-rendering="crispEdges">
<line x1="93.5" y1="81" x2="93.5" y2="503" stroke="#a8d4e6" stroke-dasharray="18 6"/>
<line x1="696.5" y1="81" x2="696.5" y2="503" stroke="#a8d4e6" stroke-dasharray="18 6"/>
</g>
<text x="82" y="104" font-size="12.5" text-anchor="start" fill="#000" textLength="8.8" lengthAdjust="spacingAndGlyphs" >A</text>
<text x="82" y="493" font-size="12.5" text-anchor="start" fill="#000" textLength="8.8" lengthAdjust="spacingAndGlyphs" >A</text>
<text x="697" y="104" font-size="12.5" text-anchor="start" fill="#000" textLength="11.8" lengthAdjust="spacingAndGlyphs" >A'</text>
<text x="697" y="493" font-size="12.5" text-anchor="start" fill="#000" textLength="11.8" lengthAdjust="spacingAndGlyphs" >A'</text>
<text x="63.5" y="243" font-size="9.3" text-anchor="start" fill="#000" textLength="59.5" lengthAdjust="spacingAndGlyphs" stroke="#000" stroke-width="0.1">Borehole 2</text>
<text x="264.5" y="248" font-size="9.3" text-anchor="start" fill="#000" textLength="59.5" lengthAdjust="spacingAndGlyphs" stroke="#000" stroke-width="0.1">Borehole 3</text>
<text x="465.5" y="238" font-size="9.3" text-anchor="start" fill="#000" textLength="59.5" lengthAdjust="spacingAndGlyphs" stroke="#000" stroke-width="0.1">Borehole 4</text>
<text x="666.5" y="253" font-size="9.3" text-anchor="start" fill="#000" textLength="59.5" lengthAdjust="spacingAndGlyphs" stroke="#000" stroke-width="0.1">Borehole 1</text>
</svg>
</body></html>
